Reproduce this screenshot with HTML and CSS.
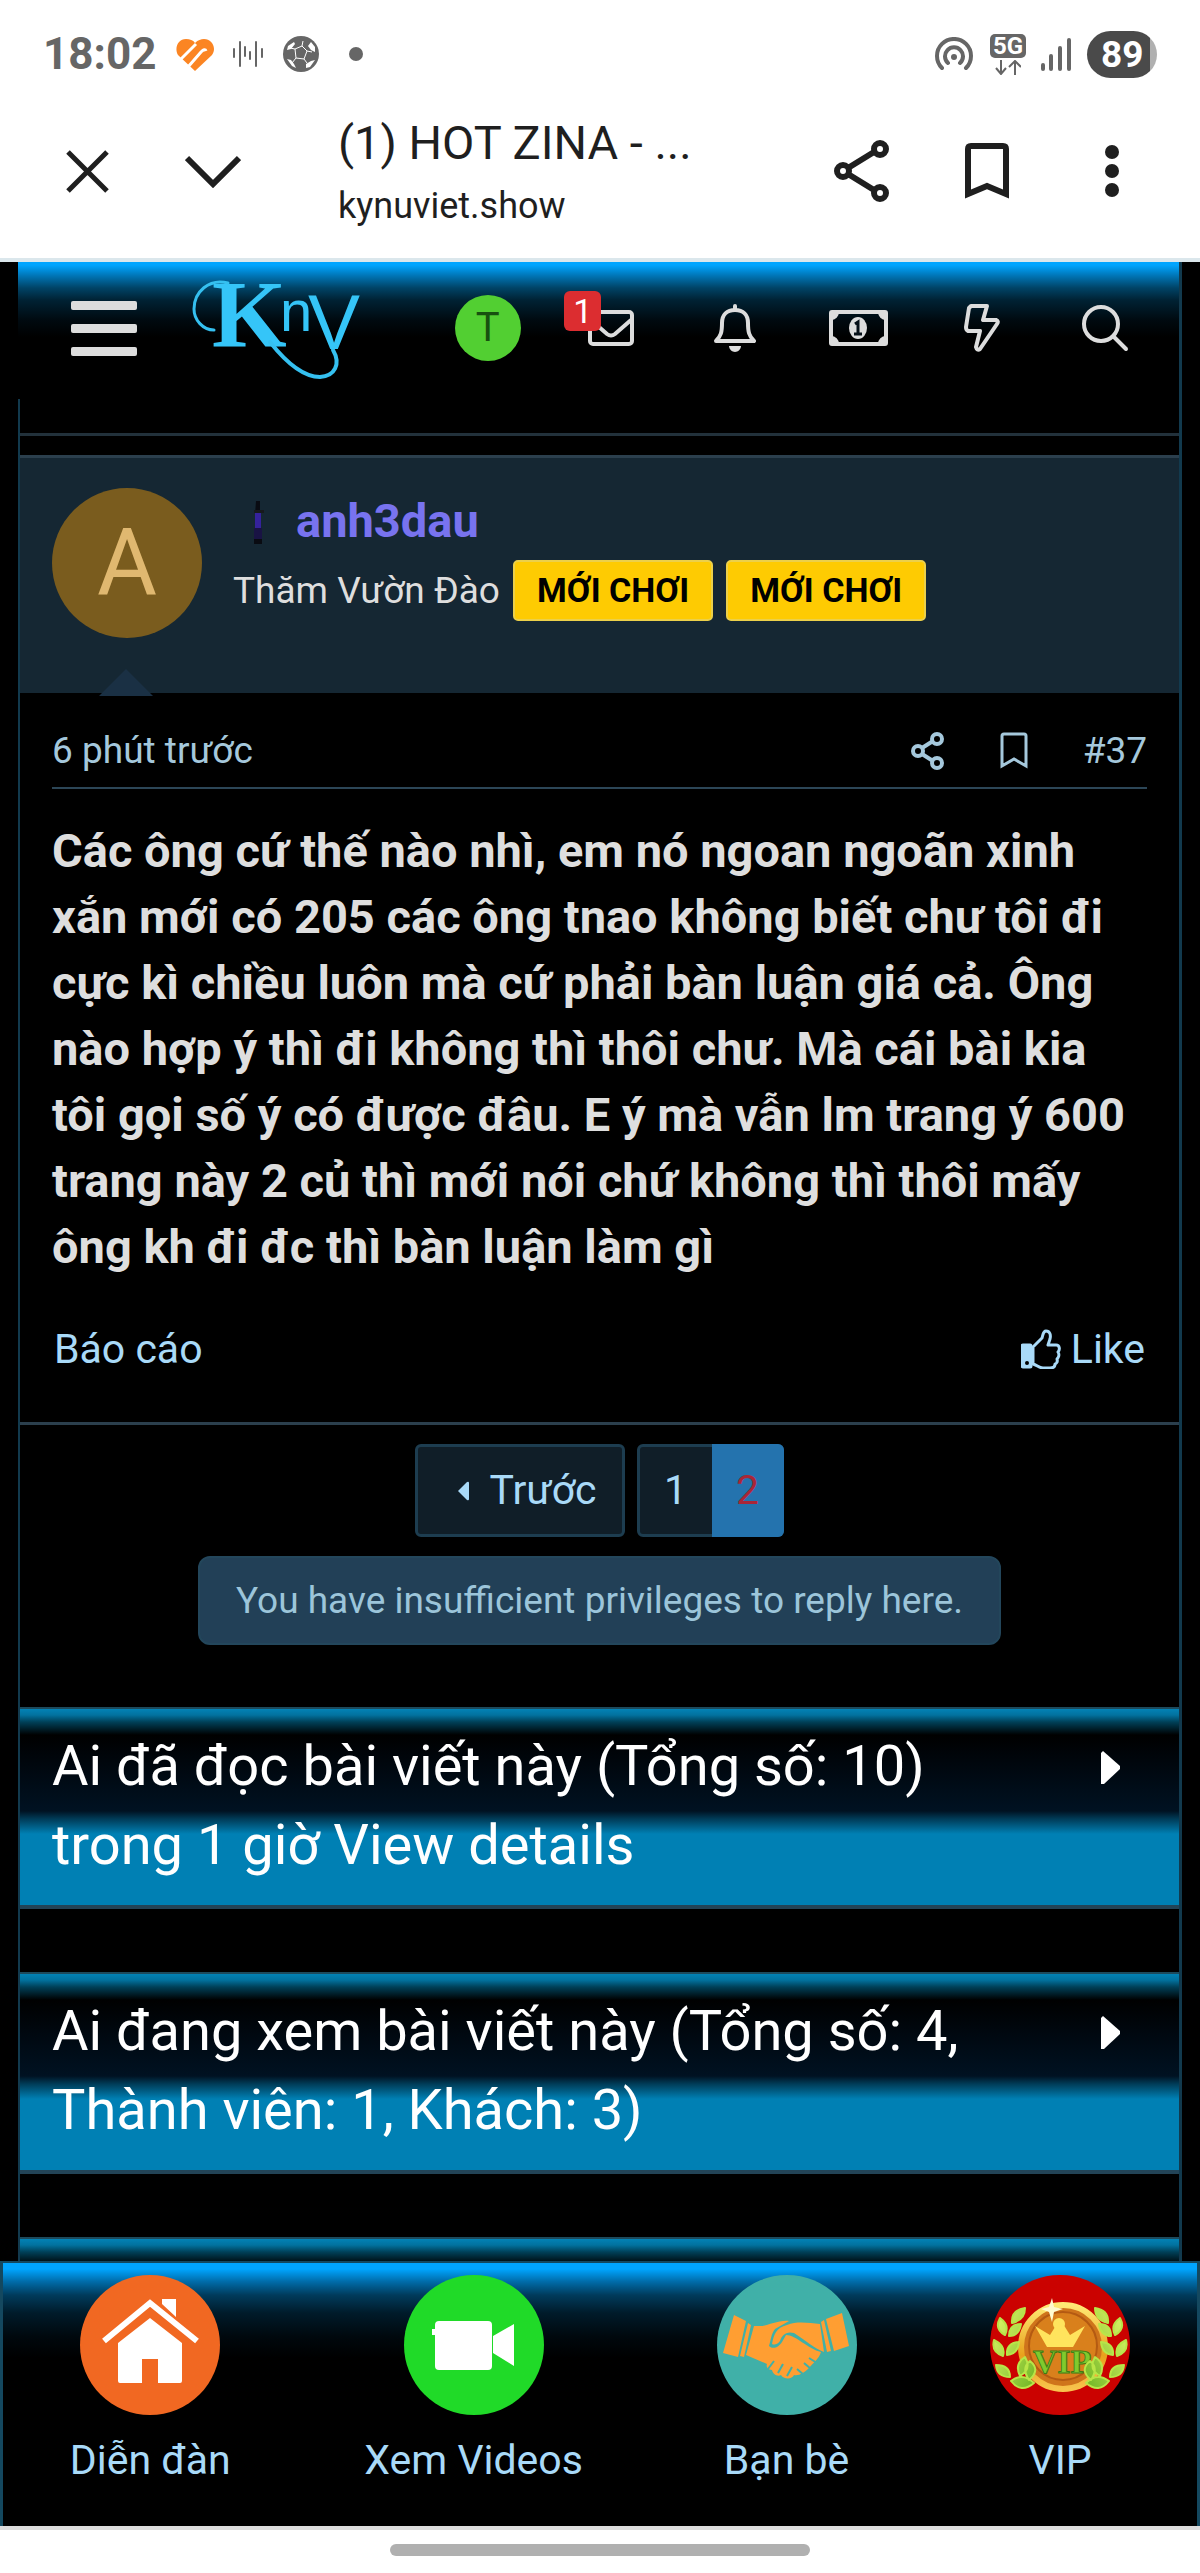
FILE: index.html
```html
<!DOCTYPE html>
<html lang="vi">
<head>
<meta charset="utf-8">
<meta name="viewport" content="width=device-width, initial-scale=1">
<title>(1) HOT ZINA - kynuviet.show</title>
<link rel="stylesheet" href="styles.css">
</head>
<body>
<div class="status">
  <div class="status-left">
    <span class="clock">18:02</span>
    <svg class="heart" width="39" height="33" viewBox="0 0 39 33" fill="none">
      <path d="M19 33 2 17C-2 10 2 1 10 1c4 0 7 1 9 4 3-3 6-4 9-4 8 0 13 9 8 16z" fill="#fb8523"/>
      <path d="M3 23 20 6M12 29 25 14q4-4 5-1" stroke="#fff" stroke-width="3"/>
    </svg>
    <svg class="wave" width="30" height="28" viewBox="0 0 30 28" stroke="#666" stroke-width="2" stroke-linecap="round"><path d="M1 9v8M7 2v24M12 7v9M17 12v7M23 2v24M29 9v8"/></svg>
    <svg class="ball" width="36" height="36" viewBox="0 0 36 36"><circle cx="18" cy="18" r="18" fill="#666"/><g fill="none" stroke="#fff" stroke-width="1"><path d="m12 13 7-3 5 5-3 8-8-1zM19 10l1-5M24 15l5 1M21 23l3 4M13 22l-4 5M12 13 7 12"/></g><g fill="#fff"><path d="m5 10 6-4 1 2-4 5-4 1zM25 10l3-4 4 5v5l-4-2zM23 28l5-3 4-1-5 7-4 1zM4 23l4 1 3 4 2 4-4-2z"/></g></svg>
    <span class="dot"></span>
  </div>
  <div class="status-right">
    <svg width="38" height="34" viewBox="0 0 38 34" fill="none" stroke="#666" stroke-width="4" stroke-linecap="round"><path d="M7 31a17 17 0 1 1 24 0M13 26a9 9 0 1 1 12 0"/><circle cx="19" cy="20" r="3" fill="#666" stroke="none"/></svg>
    <span class="net"><b>5G</b><svg width="26" height="15" viewBox="0 0 26 15" fill="none" stroke="#666" stroke-width="2"><path d="M6 0v14M1 8l5 6 5-6M20 15V1M14 7l6-6 6 6"/></svg></span>
    <svg class="signal" width="30" height="33" viewBox="0 0 30 33" stroke="#666" stroke-width="4" stroke-linecap="round"><path d="M2 27v4M10 18v13M19 10v21M28 2v29"/></svg>
    <span class="battery">89</span>
  </div>
</div>
<header class="toolbar">
  <button class="plain" aria-label="Close"><svg width="43" height="43" viewBox="0 0 43 43" stroke="#1f1f1f" stroke-width="5"><path d="m2 2 39 39M41 2 2 41"/></svg></button>
  <button class="plain chevron" aria-label="Minimize"><svg width="56" height="33" viewBox="0 0 56 33" fill="none" stroke="#1f1f1f" stroke-width="6"><path d="m2 3 26 26L54 3"/></svg></button>
  <div class="site"><div class="site-title">(1) HOT ZINA - ...</div><div class="site-url">kynuviet.show</div></div>
  <div class="tools">
    <button class="plain" aria-label="Share"><svg width="57" height="62" viewBox="0 0 57 62" fill="none" stroke="#1f1f1f" stroke-width="6"><circle cx="10" cy="31" r="6"/><circle cx="47" cy="9" r="6"/><circle cx="47" cy="53" r="6"/><path d="m15 28 26-16M15 34l26 16"/></svg></button>
    <button class="plain" aria-label="Bookmark"><svg width="44" height="56" viewBox="0 0 44 56" fill="none" stroke="#1f1f1f" stroke-width="6"><path d="M3 51V6q0-3 3-3h32q3 0 3 3v45L22 43z"/></svg></button>
    <button class="plain" aria-label="More"><svg width="14" height="52" viewBox="0 0 14 52" fill="#1f1f1f"><circle cx="7" cy="7" r="7"/><circle cx="7" cy="26" r="7"/><circle cx="7" cy="45" r="7"/></svg></button>
  </div>
</header>

<main class="forum">
  <header class="site-head">
    <button class="plain" aria-label="Menu"><svg width="66" height="55" viewBox="0 0 66 55" fill="#ddd"><rect width="66" height="9" rx="2"/><rect y="23" width="66" height="9" rx="2"/><rect y="46" width="66" height="9" rx="2"/></svg></button>
    <a class="logo" href="#" aria-label="KnV"><svg width="168" height="100" viewBox="0 0 168 100" fill="none" stroke="#35c0f0" stroke-linecap="round">
      <text class="logo-k" x="20" y="69">K</text>
      <text class="logo-n" x="88" y="53">n</text>
      <path d="M36 5C17 0 2 14 2 31c0 11 9 21 20 21" stroke-width="3"/>
      <path d="M78 64c15 19 33 35 50 35 15-1 21-13 13-27" stroke-width="4"/>
      <text class="logo-v" x="116" y="71">V</text>
    </svg></a>
    <nav class="head-icons">
      <a href="#" class="me">T</a>
      <a href="#" class="mail" aria-label="Inbox"><svg width="46" height="36" viewBox="0 0 46 36" fill="none" stroke="#ddd" stroke-width="4"><rect x="2" y="2" width="42" height="32" rx="3"/><path d="m3 10 16 14q4 3 8 0l16-14"/></svg><span class="badge">1</span></a>
      <a href="#" aria-label="Alerts"><svg width="42" height="48" viewBox="0 0 42 48" fill="none" stroke="#ddd" stroke-width="4" stroke-linejoin="round"><path d="M21 2v4M2 37c5-5 6-9 6-18C8 11 13 6 21 6s13 5 13 13c0 9 1 13 6 18z" stroke-linecap="round"/><path d="M15 42h12c0 3-3 6-6 6s-6-3-6-6z" fill="#ddd" stroke="none"/></svg></a>
      <a href="#" aria-label="Credits"><svg width="59" height="36" viewBox="0 0 59 36"><rect x="2" y="2" width="55" height="32" rx="1" fill="none" stroke="#ddd" stroke-width="4"/><path d="M2 2h8a8 8 0 0 1-8 8zM57 2h-8a8 8 0 0 0 8 8zM2 34h8a8 8 0 0 0-8-8zM57 34h-8a8 8 0 0 1 8-8z" fill="#ddd"/><ellipse cx="29" cy="18" rx="9" ry="11" fill="#ddd"/><path d="m26 14 3-2v11M25 24h8" fill="none" stroke="#061018" stroke-width="3"/></svg></a>
      <a href="#" aria-label="What's new"><svg width="36" height="48" viewBox="0 0 36 48" fill="none" stroke="#ddd" stroke-width="4" stroke-linejoin="round"><path d="M7 2h16l-4 14h13q3 1 1 4L16 45q-3 2-4-2l4-16H4q-2-1-2-4L5 4z"/></svg></a>
      <a href="#" aria-label="Search"><svg width="48" height="48" viewBox="0 0 48 48" fill="none" stroke="#ddd" stroke-width="4" stroke-linecap="round"><circle cx="20" cy="20" r="17"/><path d="m33 33 12 12"/></svg></a>
    </nav>
  </header>

  <div class="thread">
    <div class="thread-gap"></div>
    <article class="post">
      <div class="user">
        <a href="#" class="avatar">A</a>
        <div class="user-info">
          <div class="name-row"><svg class="vial" width="45" height="46" viewBox="0 0 45 46"><path d="M5 3h4v14H4zM3 40h8v6H3z" fill="#090b12"/><path d="M4 15h6v20H4z" fill="#35229c"/><path d="M3 30h8v11H3z" fill="#191344"/><path d="M3 12h10v3H3z" fill="#17191d"/></svg><a href="#" class="name">anh3dau</a></div>
          <div class="rank-row"><span>Thăm Vườn Đào</span><b class="tag">MỚI CHƠI</b><b class="tag">MỚI CHƠI</b></div>
        </div>
      </div>
      <div class="post-body">
        <div class="meta">
          <time>6 phút trước</time>
          <a href="#" aria-label="Share post"><svg width="34" height="38" viewBox="0 0 34 38" fill="none" stroke="#a5c8dc" stroke-width="4"><circle cx="7" cy="19" r="5"/><circle cx="26" cy="7" r="5"/><circle cx="26" cy="31" r="5"/><path d="m11 16 11-7M11 22l11 7"/></svg></a>
          <a href="#" aria-label="Bookmark post"><svg width="28" height="38" viewBox="0 0 28 38" fill="none" stroke="#a5c8dc" stroke-width="3"><path d="M2 34V4q0-2 2-2h20q2 0 2 2v30l-12-7z"/></svg></a>
          <a href="#">#37</a>
        </div>
        <p class="message">Các ông cứ thế nào nhì, em nó ngoan ngoãn xinh xắn mới có 205 các ông tnao không biết chư tôi đi cực kì chiều luôn mà cứ phải bàn luận giá cả. Ông nào hợp ý thì đi không thì thôi chư. Mà cái bài kia tôi gọi số ý có được đâu. E ý mà vẫn lm trang ý 600 trang này 2 củ thì mới nói chứ không thì thôi mấy ông kh đi đc thì bàn luận làm gì</p>
        <div class="actions">
          <a href="#">Báo cáo</a>
          <a href="#" class="like"><svg width="40" height="40" viewBox="0 0 40 40" fill="none" stroke="#a9daf8" stroke-width="3" stroke-linejoin="round"><path d="M12 18 21 9c1-3 1-7 4-7 4 0 5 4 4 8l-2 6h8c4 0 4 5 2 7 2 3 0 6-1 7 1 3-1 5-2 5 0 4-3 4-5 4h-7c-4 0-6-3-10-4z"/><rect x="1" y="16" width="9" height="22" rx="1" fill="#a9daf8"/><circle cx="6" cy="34" r="1" stroke="#000" stroke-width="2"/></svg>Like</a>
        </div>
      </div>
    </article>

    <nav class="pages">
      <a href="#" class="prev"><svg width="11" height="20" viewBox="0 0 11 20" fill="#a9daf8"><path d="M0 10 9 1q2-1 2 1v16q0 2-2 1z"/></svg>Trước</a>
      <div class="page-set"><a href="#">1</a><a href="#" class="current">2</a></div>
    </nav>
    <div class="notice">You have insufficient privileges to reply here.</div>

    <section class="block"><h2>Ai đã đọc bài viết này (Tổng số: 10) trong 1 giờ View details</h2><button class="plain" aria-label="Expand"><svg width="19" height="33" viewBox="0 0 19 33" fill="#fff"><path d="m2 0 17 15v3L3 33H0V2z"/></svg></button></section>
    <section class="block"><h2>Ai đang xem bài viết này (Tổng số: 4, Thành viên: 1, Khách: 3)</h2><button class="plain" aria-label="Expand"><svg width="19" height="33" viewBox="0 0 19 33" fill="#fff"><path d="m2 0 17 15v3L3 33H0V2z"/></svg></button></section>
    <section class="peek"></section>
  </div>
</main>

<nav class="tabs">
  <a href="#"><svg width="140" height="140" viewBox="0 0 140 140"><circle cx="70" cy="70" r="70" fill="#f16822"/><path d="M38 68 70 43l32 25v38q0 2-2 2H78V84H62v24H40q-2 0-2-2zM82 24h14v18L82 29z" fill="#fff"/><path d="M24 66 70 28l47 38" fill="none" stroke="#fff" stroke-width="6"/></svg>Diễn đàn</a>
  <a href="#"><svg width="140" height="140" viewBox="0 0 140 140"><circle cx="70" cy="70" r="70" fill="#20da28"/><rect x="31" y="46" width="57" height="49" rx="4" fill="#fff"/><path d="M28 54h4v6h-4zM89 61l21-12v42L89 78z" fill="#fff"/></svg>Xem Videos</a>
  <a href="#"><svg width="140" height="140" viewBox="0 0 140 140"><circle cx="70" cy="70" r="70" fill="#40b0a8"/><g fill="#ff9e32"><path d="m17 40 12 6-8 36-15-4zM31 48l3 2-7 32-4-1zM125 38l7 33-15 5-8-32zM107 45l7 31-4 1-6-30zM37 51h8c8-1 17-6 27-5l-14 8c-4 5-4 11-6 17 4 4 10 1 13-4l4-7c10 0 22 14 35 17-2 7-9 12-12 16-5 5-10 8-15 7-2 5-11 4-13 0-4 2-8-1-9-5-5 0-6-4-5-6l-21-9z"/><path d="M70 50c10-4 22-2 33-1l4 28c-9-3-19-12-30-19-8-2-12 2-14 8-3 4-6 4-8 3 2-10 4-16 15-19z"/></g><path d="m51 94 6-8M61 98l5-9M70 101l5-9M80 94l7 6M87 88l7 6M92 83l8 5" stroke="#40b0a8" stroke-width="2" fill="none"/></svg>Bạn bè</a>
  <a href="#"><svg width="140" height="140" viewBox="0 0 140 140">
    <defs><linearGradient id="gold" x2="0" y2="1"><stop stop-color="#ffe974"/><stop offset=".6" stop-color="#e9a11c"/><stop offset="1" stop-color="#f8c34c"/></linearGradient>
    <linearGradient id="leaf" x2="1" y2="1"><stop stop-color="#e5fa6c"/><stop offset="1" stop-color="#6db524"/></linearGradient>
    <g id="branch" fill="url(#leaf)" stroke="#b8e548" stroke-width="2" stroke-linejoin="round"><path d="M22 48q-1-13 13-15 0 12-13 15zM15 60Q4 54 10 43q10 7 5 17zM19 61q0-12 12-12-2 12-12 12zM13 81Q1 77 4 65q12 6 9 16zM17 80q-1-12 12-13-1 12-12 13zM20 102Q7 102 6 90q14 0 14 12zM30 101q-6-12 5-19 7 12-5 19zM44 108q-13 11-23-2 12-9 23 2zM39 105q-8-12 1-19 11 9-1 19z"/></g></defs>
    <circle cx="70" cy="70" r="70" fill="#cb0200"/>
    <circle cx="73" cy="72" r="42" fill="#cf741b" stroke="url(#gold)" stroke-width="6"/><circle cx="73" cy="71" r="34" fill="#d9801c" stroke="#b45a12" stroke-width="2"/>
    <path d="m45 51 15 9 10-16 10 16 15-9-12 21H57z" fill="#ffe45d"/><circle cx="69" cy="49" r="6" fill="#ffe45d"/>
    <text class="vip-text" x="72" y="98" text-anchor="middle">VIP</text>
    <use href="#branch"/><use href="#branch" transform="matrix(-1 0 0 1 140 0)"/>
    <path d="m62 23 2 9 9 2-9 3-2 10-3-10-8-3 8-2z" fill="#fffbd0"/></svg>VIP</a>
</nav>
<footer class="gesture"><span></span></footer>
</body>
</html>
```
FILE: styles.css
```css
* { box-sizing: border-box; }
body {
  margin: 0;
  min-height: 100vh;
  display: flex;
  flex-direction: column;
  background: #fff;
  color: #dedede;
  font-family: Roboto, "Liberation Sans", sans-serif;
  font-size: 37px;
  line-height: 46px;
}
a { color: inherit; text-decoration: none; }
svg { display: block; flex: none; }
.plain { margin: 0; padding: 0; border: 0; background: none; flex: none; }

.status {
  display: flex;
  justify-content: space-between;
  align-items: center;
  min-height: 84px;
  padding: 24px 43px 0 43px;
  color: #666;
}
.status-left, .status-right { display: flex; align-items: center; }
.clock { font-size: 44px; font-weight: 700; margin-right: 20px; }
.wave { margin: 0 20px 0 18px; }
.dot { width: 14px; height: 14px; border-radius: 50%; background: #666; margin-left: 30px; }
.net { display: flex; flex-direction: column; align-items: center; gap: 2px; margin: 0 15px 0 17px; }
.net b { width: 36px; border-radius: 5px; background: #666; color: #fff; font-size: 24px; line-height: 24px; text-align: center; }
.battery {
  width: 70px;
  margin-left: 16px;
  border-radius: 24px;
  background: linear-gradient(90deg, #4a4a4a 63px, #b0b0b0 63px);
  color: #fff;
  font-size: 37px;
  font-weight: 700;
  line-height: 47px;
  padding-left: 14px;
}

.toolbar {
  display: flex;
  align-items: center;
  min-height: 178px;
  padding: 0 81px 0 66px;
  border-bottom: 4px solid #dbe7ec;
  color: #1f1f1f;
}
.chevron { margin: 0 97px 0 76px; }
.site { display: flex; flex-direction: column; gap: 10px; }
.site-title { font-size: 47px; line-height: 60px; }
.site-url { font-size: 36px; }
.tools { display: flex; align-items: center; margin-left: auto; }
.tools button + button { margin-left: 75px; }
.tools button:last-child { margin-left: 96px; }

.forum { flex: 1; display: flex; flex-direction: column; padding: 0 18px; background: #000; }
.site-head {
  display: flex;
  align-items: center;
  padding: 16px 12px 21px 53px;
  border-right: 3px solid #123a4e;
  background: linear-gradient(#00a5ff 0, #00a5ff 3px, #0074b4 14px, #004366 26px, #002234 38px, #000a10 58px, #000 75px);
}
.logo { margin: 0 66px 0 55px; }
.logo svg { overflow: visible; }
.logo text { fill: #35c5f8; stroke: none; }
.logo-k { font: 700 96px "Liberation Serif", serif; }
.logo-n { font: 400 58px "Liberation Sans", sans-serif; }
.logo-v { font: 400 78px "Liberation Sans", sans-serif; }
.head-icons { flex: 1; display: grid; grid-template-columns: repeat(6, 1fr); align-items: center; justify-items: center; }
.me {
  width: 66px;
  border-radius: 50%;
  background: #52cf32;
  color: #175010;
  font-size: 40px;
  line-height: 66px;
  text-align: center;
}
.mail { position: relative; }
.badge {
  position: absolute;
  top: -19px;
  left: -24px;
  width: 37px;
  border-radius: 6px;
  background: #dc2d30;
  color: #fff;
  font-size: 34px;
  line-height: 40px;
  text-align: center;
}

.thread { flex: 1; display: flex; flex-direction: column; border: solid #123a4e; border-width: 0 3px 0 2px; }
.thread-gap { height: 37px; border-bottom: 3px solid #22313b; }
.post { margin-top: 19px; border: solid #2b3f4d; border-width: 3px 0; }
.user { position: relative; display: flex; gap: 31px; padding: 30px 32px 55px; background: #152733; }
.user::after {
  content: "";
  position: absolute;
  left: 79px;
  bottom: -3px;
  border: solid transparent;
  border-width: 0 27px 27px;
  border-bottom-color: #1a3044;
}
.avatar {
  width: 150px;
  border-radius: 50%;
  background: #7a5c1e;
  color: #e0b870;
  font-size: 92px;
  line-height: 150px;
  text-align: center;
}
.user-info { padding-top: 6px; }
.name-row { display: flex; align-items: center; margin-bottom: 12px; line-height: 54px; }
.vial { margin-left: 18px; }
.name { color: #7873ef; font-size: 47px; font-weight: 700; }
.rank-row { display: flex; align-items: center; gap: 13px; }
.tag {
  padding: 0 22px;
  border: 2px solid #ecd04a;
  border-radius: 5px;
  background: #fecb02;
  color: #000;
  font-size: 34px;
  line-height: 57px;
}

.post-body { padding: 35px 32px 49px; }
.meta { display: flex; align-items: center; padding-bottom: 13px; border-bottom: 2px solid #2c4657; color: #a5c8dc; }
.meta time { flex: 1; }
.meta a + a { margin-left: 55px; }
.message { margin: 29px 0 45px; font-size: 47px; font-weight: 700; line-height: 66px; }
.actions { display: flex; justify-content: space-between; padding: 0 2px; color: #a9daf8; font-size: 41px; line-height: 48px; }
.like { display: flex; align-items: center; gap: 10px; }

.pages { display: flex; justify-content: center; gap: 12px; margin: 19px 0; color: #a9daf8; font-size: 41px; line-height: 87px; }
.prev, .page-set { display: flex; align-items: center; border: 3px solid #1d3d50; border-radius: 6px; background: #101e28; }
.prev { gap: 20px; padding: 0 25px 0 40px; }
.page-set a { width: 72px; text-align: center; }
.page-set .current { margin: -3px -3px -3px 0; padding: 3px 0; border-radius: 0 6px 6px 0; background: #2473ae; color: #a92638; }
.notice {
  align-self: center;
  margin-bottom: 62px;
  padding: 0 36px;
  border: 2px solid #23465b;
  border-radius: 12px;
  background: #224057;
  color: #9cc5da;
  line-height: 85px;
}

.block, .peek {
  border-top: 2px solid #1d4a5c;
  background: linear-gradient(#0282b5 0, #02729f 6px, #004058 13px, #000 26px, #000810 60px, #001222 102px, #003c58 110px, #0080b4 125px);
}
.block {
  display: flex;
  align-items: flex-start;
  justify-content: space-between;
  margin-bottom: 63px;
  padding: 18px 59px 20px 32px;
  border-bottom: 4px solid #234457;
  color: #fff;
}
.block h2 { flex: 1; max-width: 920px; margin: 0; font-size: 56px; font-weight: 400; line-height: 79px; }
.block button { padding-top: 24px; }
.peek { flex: 1; min-height: 24px; }

.tabs {
  display: flex;
  justify-content: space-around;
  padding: 12px 0 42px;
  border: solid #14485f;
  border-width: 2px 3px 0;
  background: #000 linear-gradient(#00a5ff 0, #00a5ff 6px, #006ead 18px, #003b5c 32px, #001b2a 50px, #00080d 74px, #000 95px);
  color: #a9daf8;
  font-size: 41px;
  line-height: 48px;
}
.tabs a { display: flex; flex-direction: column; align-items: center; gap: 21px; }
.vip-text { fill: #7fca2e; stroke: #3e7c14; stroke-width: 1px; font: 700 34px "Liberation Serif", serif; }

.gesture { display: flex; justify-content: center; min-height: 47px; padding-top: 14px; border-top: 4px solid #ddd; }
.gesture span { width: 35%; height: 12px; border-radius: 6px; background: #b0b0b0; }
```
